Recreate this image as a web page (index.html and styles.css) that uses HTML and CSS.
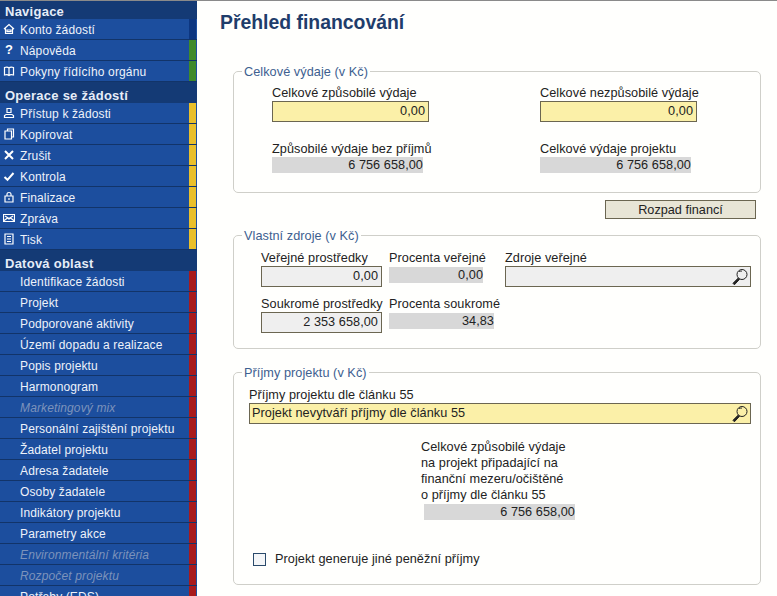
FILE: index.html
```html
<!DOCTYPE html>
<html lang="cs">

<head>
    <meta charset="UTF-8">
    <meta name="viewport" content="width=device-width, initial-scale=1.0">
    <title>Přehled financování</title>
    <link rel="stylesheet" href="styles.css">
</head>

<body>
    <svg class="defs" width="0" height="0">
        <symbol id="i-home" viewBox="0 0 12 12"><path d="M1 6 6 1.5 11 6M2.5 5.5V10.5H9.5V5.5M4 7H8V8.7H4Z"/></symbol>
        <symbol id="i-book" viewBox="0 0 12 12"><path d="M6 3C5 2 3 2 1.5 2.5V10C3 9.5 5 9.5 6 10.5 7 9.5 9 9.5 10.5 10V2.5C9 2 7 2 6 3ZM6 3V10.5"/></symbol>
        <symbol id="i-user" viewBox="0 0 12 12"><path d="M4 1.5H8V5.5H4ZM1.5 10.5V8.5L3 7.5H9L10.5 8.5V10.5Z"/></symbol>
        <symbol id="i-copy" viewBox="0 0 12 12"><path d="M4.5 3V1H10.5V9H8.5M2 3H8.5V11H2Z"/></symbol>
        <symbol id="i-cross" viewBox="0 0 12 12"><path class="thick" d="M2 2 10 10M10 2 2 10"/></symbol>
        <symbol id="i-check" viewBox="0 0 12 12"><path class="thick" d="M1.5 7 4.5 9.8 10.5 3"/></symbol>
        <symbol id="i-lock" viewBox="0 0 12 12"><path d="M4 5V3C4 1 8 1 8 3V5M2 5H10V11H2ZM6 7V9"/></symbol>
        <symbol id="i-mail" viewBox="0 0 12 12"><path d="M.5 2.5H11.5V9.5H.5ZM.5 9 4.5 6 6 7 7.5 6 11.5 9M2 4 6 6.5 10 4"/></symbol>
        <symbol id="i-doc" viewBox="0 0 12 12"><path d="M2 1H10V11H2ZM4 3.5H8M4 6H8M4 8.5H8"/></symbol>
        <symbol id="i-search" viewBox="0 0 18 18"><circle cx="11" cy="6.5" r="5"/><path d="M8 3.8C9 3 10 3 11 3.2"/><path class="handle" d="M7.3 10 2 15.3 3.4 16.8 8.6 11.2"/></symbol>
    </svg>

    <div class="sidebar">
        <div class="nav-title">Navigace</div>
        <a class="nav-item"><svg class="nav-icon"><use href="#i-home"/></svg><span class="nav-text">Konto žádostí</span><span class="strip strip-blue"></span></a>
        <a class="nav-item"><span class="nav-icon nav-glyph">?</span><span class="nav-text">Nápověda</span><span class="strip strip-green"></span></a>
        <a class="nav-item"><svg class="nav-icon"><use href="#i-book"/></svg><span class="nav-text">Pokyny řídícího orgánu</span><span class="strip strip-green"></span></a>

        <div class="nav-title">Operace se žádostí</div>
        <a class="nav-item"><svg class="nav-icon"><use href="#i-user"/></svg><span class="nav-text">Přístup k žádosti</span><span class="strip strip-yellow"></span></a>
        <a class="nav-item"><svg class="nav-icon"><use href="#i-copy"/></svg><span class="nav-text">Kopírovat</span><span class="strip strip-yellow"></span></a>
        <a class="nav-item"><svg class="nav-icon"><use href="#i-cross"/></svg><span class="nav-text">Zrušit</span><span class="strip strip-yellow"></span></a>
        <a class="nav-item"><svg class="nav-icon"><use href="#i-check"/></svg><span class="nav-text">Kontrola</span><span class="strip strip-yellow"></span></a>
        <a class="nav-item"><svg class="nav-icon"><use href="#i-lock"/></svg><span class="nav-text">Finalizace</span><span class="strip strip-yellow"></span></a>
        <a class="nav-item"><svg class="nav-icon"><use href="#i-mail"/></svg><span class="nav-text">Zpráva</span><span class="strip strip-yellow"></span></a>
        <a class="nav-item"><svg class="nav-icon"><use href="#i-doc"/></svg><span class="nav-text">Tisk</span><span class="strip strip-yellow"></span></a>

        <div class="nav-title">Datová oblast</div>
        <a class="nav-item"><span class="nav-icon"></span><span class="nav-text">Identifikace žádosti</span><span class="strip strip-red"></span></a>
        <a class="nav-item"><span class="nav-icon"></span><span class="nav-text">Projekt</span><span class="strip strip-red"></span></a>
        <a class="nav-item"><span class="nav-icon"></span><span class="nav-text">Podporované aktivity</span><span class="strip strip-red"></span></a>
        <a class="nav-item"><span class="nav-icon"></span><span class="nav-text">Území dopadu a realizace</span><span class="strip strip-red"></span></a>
        <a class="nav-item"><span class="nav-icon"></span><span class="nav-text">Popis projektu</span><span class="strip strip-red"></span></a>
        <a class="nav-item"><span class="nav-icon"></span><span class="nav-text">Harmonogram</span><span class="strip strip-red"></span></a>
        <a class="nav-item disabled"><span class="nav-icon"></span><span class="nav-text">Marketingový mix</span><span class="strip strip-red"></span></a>
        <a class="nav-item"><span class="nav-icon"></span><span class="nav-text">Personální zajištění projektu</span><span class="strip strip-red"></span></a>
        <a class="nav-item"><span class="nav-icon"></span><span class="nav-text">Žadatel projektu</span><span class="strip strip-red"></span></a>
        <a class="nav-item"><span class="nav-icon"></span><span class="nav-text">Adresa žadatele</span><span class="strip strip-red"></span></a>
        <a class="nav-item"><span class="nav-icon"></span><span class="nav-text">Osoby žadatele</span><span class="strip strip-red"></span></a>
        <a class="nav-item"><span class="nav-icon"></span><span class="nav-text">Indikátory projektu</span><span class="strip strip-red"></span></a>
        <a class="nav-item"><span class="nav-icon"></span><span class="nav-text">Parametry akce</span><span class="strip strip-red"></span></a>
        <a class="nav-item disabled"><span class="nav-icon"></span><span class="nav-text">Environmentální kritéria</span><span class="strip strip-red"></span></a>
        <a class="nav-item disabled"><span class="nav-icon"></span><span class="nav-text">Rozpočet projektu</span><span class="strip strip-red"></span></a>
        <a class="nav-item"><span class="nav-icon"></span><span class="nav-text">Potřeby (EDS)</span><span class="strip strip-red"></span></a>
    </div>

    <div class="main">
        <h1>Přehled financování</h1>

        <fieldset class="box box-costs">
            <legend>Celkové výdaje (v Kč)</legend>
            <div class="costs-grid">
                <div class="field">
                    <label>Celkové způsobilé výdaje</label>
                    <div class="input input-yellow w-157">0,00</div>
                </div>
                <div class="field">
                    <label>Celkové nezpůsobilé výdaje</label>
                    <div class="input input-yellow w-157">0,00</div>
                </div>
                <div class="field">
                    <label>Způsobilé výdaje bez příjmů</label>
                    <div class="readonly w-151">6 756 658,00</div>
                </div>
                <div class="field">
                    <label>Celkové výdaje projektu</label>
                    <div class="readonly w-151">6 756 658,00</div>
                </div>
            </div>
        </fieldset>

        <div class="button-row">
            <button type="button">Rozpad financí</button>
        </div>

        <fieldset class="box box-sources">
            <legend>Vlastní zdroje (v Kč)</legend>
            <div class="sources-grid">
                <div class="field">
                    <label>Veřejné prostředky</label>
                    <div class="input input-grey w-121">0,00</div>
                </div>
                <div class="field">
                    <label>Procenta veřejné</label>
                    <div class="readonly readonly-short w-94">0,00</div>
                </div>
                <div class="field">
                    <label>Zdroje veřejné</label>
                    <div class="input input-grey input-lookup">
                        <svg class="lookup"><use href="#i-search"/></svg>
                    </div>
                </div>
                <div class="field">
                    <label>Soukromé prostředky</label>
                    <div class="input input-grey w-121">2 353 658,00</div>
                </div>
                <div class="field">
                    <label>Procenta soukromé</label>
                    <div class="readonly readonly-short w-105">34,83</div>
                </div>
            </div>
        </fieldset>

        <fieldset class="box box-income">
            <legend>Příjmy projektu (v Kč)</legend>
            <div class="income-body">
                <div class="field">
                    <label>Příjmy projektu dle článku 55</label>
                    <div class="input input-yellow input-lookup input-text">
                        Projekt nevytváří příjmy dle článku 55
                        <svg class="lookup"><use href="#i-search"/></svg>
                    </div>
                </div>
                <div class="gap-field">
                    <label>Celkové způsobilé výdaje<br>na projekt připadající na<br>finanční mezeru/očištěné<br>o příjmy dle článku 55</label>
                    <div class="readonly gap-value">6 756 658,00</div>
                </div>
                <div class="check-row">
                    <span class="checkbox"></span>
                    <span>Projekt generuje jiné peněžní příjmy</span>
                </div>
            </div>
        </fieldset>
    </div>
</body>

</html>
```

FILE: styles.css
```css
* {
    box-sizing: border-box;
    font-family: "Liberation Sans", Arial, sans-serif;
}

html,
body {
    margin: 0;
    padding: 0;
    height: 596px;
    overflow: hidden;
}

body {
    display: flex;
    background: #fffffd;
    border-top: 1px solid #8a8a8a;
    color: #222;
    font-size: 12px;
}

.defs {
    display: block;
    width: 0;
    height: 0;
}

/* sidebar */

.sidebar {
    flex: 0 0 197px;
    width: 197px;
    height: 595px;
    overflow: hidden;
    background: #143a75;
}

.nav-title {
    height: 21px;
    padding: 6px 0 0 5px;
    background: #143a75;
    color: #e6edf8;
    font-size: 13px;
    font-weight: bold;
    line-height: 15px;
    letter-spacing: 0.25px;
}

.nav-title:first-child {
    height: 18px;
    padding-top: 3px;
}

.nav-item {
    display: flex;
    align-items: center;
    height: 21px;
    background: #1c4e9e;
    border-bottom: 1px solid #123469;
    color: #eef2fa;
    letter-spacing: 0.13px;
}

.nav-icon {
    flex: 0 0 12px;
    width: 12px;
    height: 12px;
    margin: 0 5px 0 3px;
    fill: none;
    stroke: #fff;
    stroke-width: 1.2;
}

.thick {
    stroke-width: 2;
}

.nav-glyph {
    color: #fff;
    font-size: 13px;
    font-weight: bold;
    line-height: 12px;
    text-align: center;
}

.nav-text {
    flex: 1;
    padding-top: 1px;
    white-space: nowrap;
}

.disabled {
    color: #7c93bb;
    font-style: italic;
}

.strip {
    flex: 0 0 7px;
    height: 100%;
    margin-right: 1px;
}

.strip-blue {
    background: #0d3680;
}

.strip-green {
    background: #3f8a2b;
}

.strip-yellow {
    background: #e9bf2b;
}

.strip-red {
    background: #a81a1c;
}

/* main */

.main {
    flex: 1;
    padding: 0 16px 0 23px;
    font-size: 12.7px;
    letter-spacing: 0.06px;
}

h1 {
    margin: 11px 0 29px;
    color: #1f3d6b;
    font-size: 19.4px;
    line-height: 21px;
    letter-spacing: 0;
}

.box {
    margin: 0 0 0 13px;
    padding: 0;
    border: 1px solid #cfcfc9;
    border-radius: 5px;
}

legend {
    margin-left: 8px;
    padding: 3px 2px 0;
    color: #3d6090;
    font-size: 12.7px;
    line-height: 15px;
}

label {
    display: block;
    color: #222;
    line-height: 15px;
    white-space: nowrap;
}

.input {
    height: 21px;
    padding: 0 3px;
    border: 1px solid #6b6651;
    color: #222;
    line-height: 19px;
    text-align: right;
}

.input-yellow {
    background: #fbf0a8;
}

.input-grey {
    background: #efefef;
}

.input-text {
    padding-left: 2px;
    text-align: left;
}

.input-lookup {
    position: relative;
}

.lookup {
    position: absolute;
    top: 1px;
    right: 1px;
    width: 18px;
    height: 18px;
    fill: none;
    stroke: #222;
    stroke-width: 1;
}

.handle {
    fill: #222;
}

.readonly {
    height: 16px;
    background: #d8d8d8;
    color: #222;
    line-height: 16px;
    text-align: right;
}

.w-157 {
    width: 157px;
}

.w-151 {
    width: 151px;
}

.w-121 {
    width: 121px;
}

.w-105 {
    width: 105px;
}

.w-94 {
    width: 94px;
}

/* celkove vydaje */

.box-costs {
    height: 131px;
}

.costs-grid {
    display: grid;
    grid-template-columns: 268px 1fr;
    row-gap: 20px;
    padding: 6px 0 0 38px;
}

.button-row {
    display: flex;
    justify-content: flex-end;
    margin: 7px 5px 7px 0;
}

button {
    width: 151px;
    height: 19px;
    padding: 0;
    background: #e8e5d6;
    border: 1px solid #6b6651;
    color: #222;
    font-size: 12.7px;
}

/* vlastni zdroje */

.box-sources {
    height: 123px;
}

.sources-grid {
    display: grid;
    grid-template-columns: 128px 116px 1fr;
    row-gap: 10px;
    padding: 7px 9px 0 27px;
}

.readonly-short {
    margin-top: 1px;
}

/* prijmy */

.box-income {
    height: 222px;
    margin-top: 14px;
}

.income-body {
    padding: 7px 9px 0 15px;
}

.gap-field {
    width: 160px;
    margin: 15px 0 0 172px;
}

.gap-field label {
    line-height: 16px;
}

.gap-value {
    width: 151px;
    margin: 1px 0 0 3px;
}

.check-row {
    display: flex;
    align-items: center;
    gap: 9px;
    margin: 32px 0 0 4px;
}

.checkbox {
    width: 13px;
    height: 13px;
    background: #f4f6f8;
    border: 1px solid #2a4a6b;
}
```
